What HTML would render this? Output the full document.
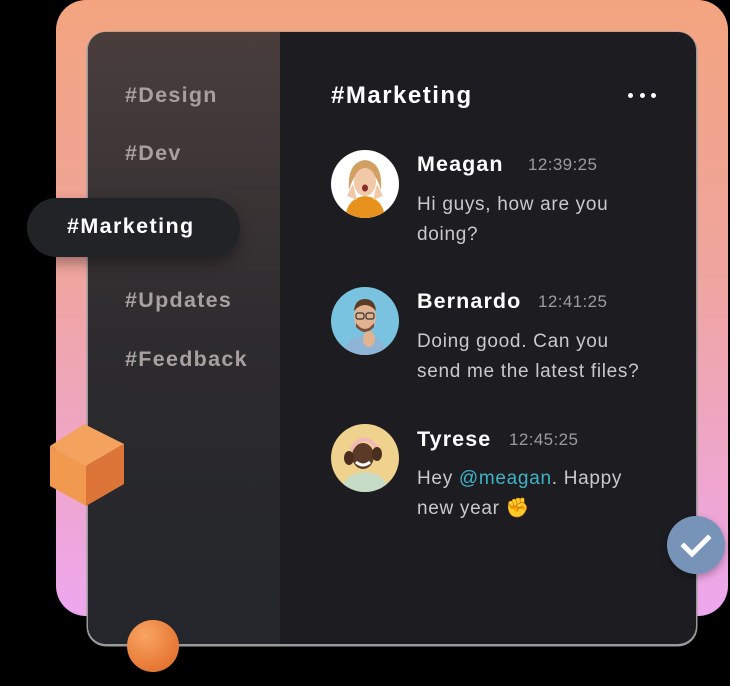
<!DOCTYPE html>
<html><head><meta charset="utf-8"><style>
*{margin:0;padding:0;box-sizing:border-box}
body{width:730px;height:686px;background:#000;position:relative;overflow:hidden;font-family:"Liberation Sans",sans-serif}
.bg{position:absolute;left:56px;top:0;width:672px;height:616px;border-radius:30px;background:linear-gradient(180deg,#f3a47f 0%,#efa59f 45%,#eea7ee 100%)}
.card{position:absolute;left:88px;top:32px;width:608px;height:612px;border-radius:18px;background:#1d1d21;overflow:hidden;box-shadow:0 1px 0 1.5px #9a9a9a}
.left{position:absolute;left:0;top:0;width:192px;height:612px;background:linear-gradient(180deg,#4a3e3d 0%,#2d2b2e 50%,#23262b 100%)}
.ch{position:absolute;left:37px;font-size:21.5px;font-weight:bold;color:#a8a09f;letter-spacing:1.3px}
.pill{position:absolute;left:27px;top:198px;width:213px;height:59px;border-radius:30px;background:#212326;box-shadow:0 6px 14px rgba(0,0,0,.35)}
.pill span{position:absolute;left:40px;top:16px;font-size:21.5px;font-weight:bold;color:#fff;letter-spacing:1.4px}
.title{position:absolute;left:331px;top:82px;font-size:24px;font-weight:bold;color:#fff;letter-spacing:1.5px}
.dot{position:absolute;top:93px;width:5px;height:5px;border-radius:50%;background:#fff}
.av{position:absolute;left:331px;width:68px;height:68px;border-radius:50%;overflow:hidden}
.nm{position:absolute;left:417px;font-size:21.5px;font-weight:bold;color:#fff;letter-spacing:1.1px}
.tm{position:absolute;font-size:17px;color:#9b9b9d;letter-spacing:0.4px}
.msg{position:absolute;left:417px;font-size:19px;color:#c9c9cb;line-height:30px;letter-spacing:0.7px}
</style></head><body>
<div class="bg"></div>
<div class="card"><div class="left"></div></div>
<div class="ch" style="top:83px;left:125px">#Design</div>
<div class="ch" style="top:141px;left:125px">#Dev</div>
<div class="ch" style="top:288px;left:125px">#Updates</div>
<div class="ch" style="top:347px;left:125px">#Feedback</div>
<div class="pill"><span>#Marketing</span></div>
<div class="title">#Marketing</div>
<div class="dot" style="left:628px"></div><div class="dot" style="left:640px"></div><div class="dot" style="left:651px"></div>

<div class="av" style="top:150px"><svg width="68" height="68"><rect width="68" height="68" fill="#fff"/><path d="M14 68 Q16 48 34 46 Q52 48 54 68Z" fill="#e8921e"/><path d="M18 40 Q16 12 34 10 Q52 12 50 40 Q44 20 34 20 Q24 20 18 40Z" fill="#d2a062"/><ellipse cx="34" cy="32" rx="11" ry="14" fill="#f1c9a8"/><ellipse cx="34" cy="38" rx="3" ry="3.5" fill="#8a2a2a"/><path d="M16 46 L22 34 L26 50Z M52 46 L46 34 L42 50Z" fill="#f1c9a8"/></svg></div>
<div class="nm" style="top:152px">Meagan</div><div class="tm" style="left:528px;top:155px">12:39:25</div>
<div class="msg" style="top:190px">Hi guys, how are you<br>doing?</div>

<div class="av" style="top:287px"><svg width="68" height="68"><rect width="68" height="68" fill="#79c3e1"/><path d="M12 68 Q14 50 34 48 Q54 50 56 68Z" fill="#8fb5d6"/><ellipse cx="34" cy="30" rx="11" ry="14" fill="#e2b390"/><path d="M23 24 Q24 12 34 12 Q44 12 45 24 Q40 18 34 18 Q28 18 23 24Z" fill="#5b3b25"/><path d="M25 36 Q34 48 43 36 L43 40 Q34 50 25 40Z" fill="#7a5038"/><rect x="25" y="26" width="8" height="6" rx="2" fill="none" stroke="#333" stroke-width="1.2"/><rect x="35" y="26" width="8" height="6" rx="2" fill="none" stroke="#333" stroke-width="1.2"/><ellipse cx="38" cy="52" rx="6" ry="8" fill="#e2b390"/></svg></div>
<div class="nm" style="top:289px">Bernardo</div><div class="tm" style="left:538px;top:292px">12:41:25</div>
<div class="msg" style="top:327px">Doing good. Can you<br>send me the latest files?</div>

<div class="av" style="top:424px"><svg width="68" height="68"><rect width="68" height="68" fill="#f0d28f"/><path d="M10 68 Q12 50 34 48 Q56 50 58 68Z" fill="#c7dcc6"/><ellipse cx="32" cy="32" rx="11" ry="13" fill="#5a3a28"/><path d="M20 26 Q32 6 46 24" stroke="#f2b8b8" stroke-width="4" fill="none"/><path d="M25 38 Q32 44 39 38" stroke="#fff" stroke-width="3" fill="none"/><ellipse cx="18" cy="34" rx="5" ry="7" fill="#4a2e20"/><ellipse cx="46" cy="30" rx="5" ry="7" fill="#4a2e20"/></svg></div>
<div class="nm" style="top:427px">Tyrese</div><div class="tm" style="left:509px;top:430px">12:45:25</div>
<div class="msg" style="top:464px">Hey <span style="color:#3eb3c8">@meagan</span>. Happy<br>new year <span style="color:#e9a23b">✊</span></div>

<svg style="position:absolute;left:46px;top:422px" width="82" height="86"><polygon points="38,2 78,22 40,44 4,24" fill="#f4a35f"/><polygon points="4,24 40,44 40,84 4,64" fill="#f19a4f"/><polygon points="40,44 78,22 78,62 40,84" fill="#dd7438"/></svg>
<div style="position:absolute;left:127px;top:620px;width:52px;height:52px;border-radius:50%;background:radial-gradient(circle at 35% 30%,#f8a564,#ea7d3a 60%,#d66a2c)"></div>
<div style="position:absolute;left:667px;top:516px;width:58px;height:58px;border-radius:50%;background:#7794b8;box-shadow:0 3px 8px rgba(0,0,0,.3)"><svg width="58" height="58"><path d="M17 30 L25 38 L41 22" stroke="#fff" stroke-width="5" fill="none" stroke-linecap="square"/></svg></div>
</body></html>
